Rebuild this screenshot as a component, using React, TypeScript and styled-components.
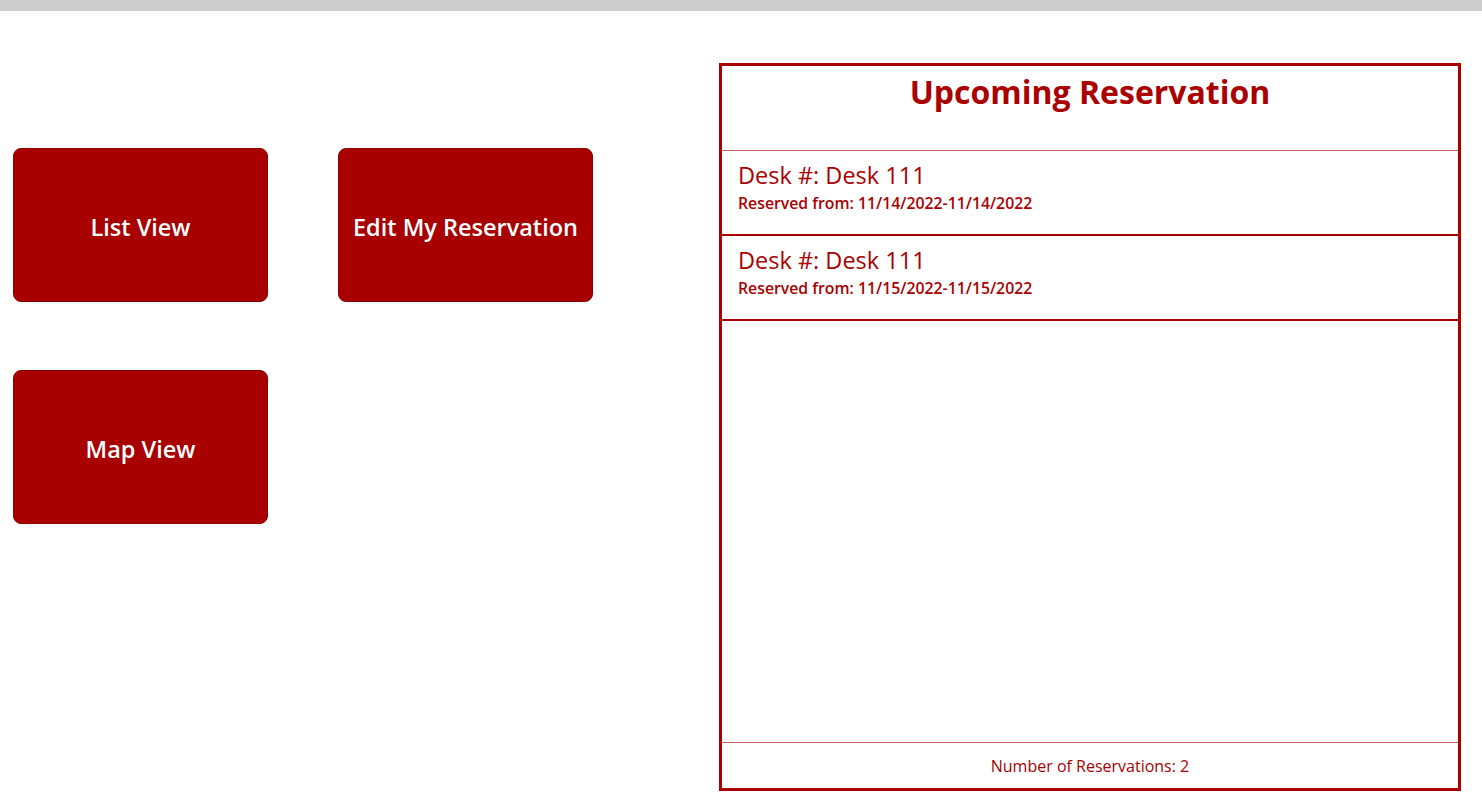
import styled, { createGlobalStyle } from 'styled-components';

const GlobalStyle = createGlobalStyle`
	html, body {
		margin: 0;
		padding: 0;
		background: #ffffff;
		font-family: 'Open Sans', 'Noto Sans', sans-serif;
	}
`;

const reservations = [
	{ id: 1, desk: 'Desk 111', from: '11/14/2022', to: '11/14/2022' },
	{ id: 2, desk: 'Desk 111', from: '11/15/2022', to: '11/15/2022' },
];

const navButtons = ['List View', 'Edit My Reservation', 'Map View'];

export default function App() {
	return (
		<>
			<GlobalStyle />
			<TopBar />
			<Main>
				<ButtonGrid>
					{navButtons.map(label => <NavButton key={label}>{label}</NavButton>)}
				</ButtonGrid>
				<ReservationPanel>
					<PanelHeader>
						<h2>Upcoming Reservation</h2>
					</PanelHeader>
					<ReservationList>
						{reservations.map(r => (
							<ReservationRow key={r.id}>
								<DeskLabel>Desk #: {r.desk}</DeskLabel>
								<DateLabel>Reserved from: {r.from}-{r.to}</DateLabel>
							</ReservationRow>
						))}
					</ReservationList>
					<PanelFooter>Number of Reservations: {reservations.length}</PanelFooter>
				</ReservationPanel>
			</Main>
		</>
	);
}

const TopBar = styled.div`
	height: 11px;
	background: #cccccc;
`;

const Main = styled.div`
	display: flex;
	align-items: flex-start;
	padding-top: 52px;
`;

const ButtonGrid = styled.div`
	width: 706px;
	padding-left: 13px;
	padding-top: 85px;
	display: grid;
	grid-template-columns: 255px 255px;
	column-gap: 70px;
	row-gap: 68px;
	align-content: start;
`;

const NavButton = styled.button`
	height: 154px;
	border: 1px solid #8c0000;
	border-radius: 8px;
	background: #a80000;
	color: #ffffff;
	font-family: 'Open Sans', sans-serif;
	font-size: 23.5px;
	font-weight: 600;
	cursor: pointer;
	padding: 3px 0 0;
`;

const ReservationPanel = styled.div`
	width: 736px;
	height: 722px;
	border: 3px solid #aa0000;
	display: flex;
	flex-direction: column;
	color: #aa0000;
`;

const PanelHeader = styled.div`
	height: 84px;
	border-bottom: 1px solid #cc5f5f;
	text-align: center;

	h2 {
		margin: 0;
		padding-top: 5px;
		font-size: 32px;
		font-weight: 700;
		line-height: 42px;
	}
`;

const ReservationList = styled.div`
	flex: 1;
	display: flex;
	flex-direction: column;
	border-bottom: 1px solid #cc5f5f;
`;

const ReservationRow = styled.div`
	height: 85px;
	padding: 8px 16px 0;
	box-sizing: border-box;
	border-bottom: 2px solid #aa0000;
`;

const DeskLabel = styled.div`
	font-size: 23.5px;
	line-height: 33px;
`;

const DateLabel = styled.div`
	font-size: 15.8px;
	font-weight: 600;
	line-height: 22px;
`;

const PanelFooter = styled.div`
	height: 45px;
	display: flex;
	align-items: center;
	justify-content: center;
	font-size: 16px;
	box-sizing: border-box;
`;
